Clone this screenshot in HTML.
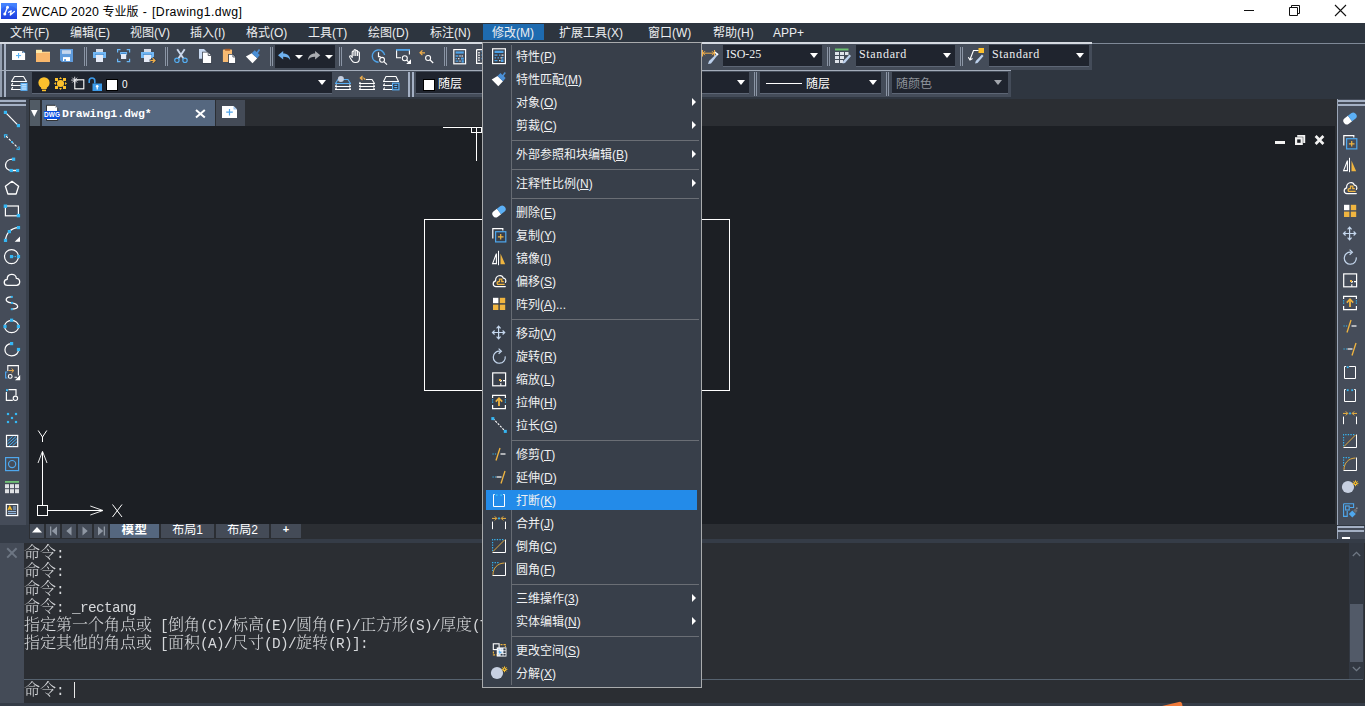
<!DOCTYPE html>
<html lang="zh-CN">
<head>
<meta charset="utf-8">
<title>ZWCAD 2020 专业版 - [Drawing1.dwg]</title>
<style>
*{box-sizing:border-box;margin:0;padding:0}
html,body{width:1365px;height:706px;overflow:hidden;background:#2b2e33}
body{position:relative;font-family:"Liberation Sans","Noto Sans CJK SC",sans-serif;font-size:12px;color:#e6e8ea}
.abs{position:absolute}
svg{position:absolute;overflow:visible}
#title{left:0;top:0;width:1365px;height:23px;background:#fff;color:#000}
#title .t{position:absolute;left:22px;top:4px;font-size:12.3px;line-height:16px;white-space:nowrap;letter-spacing:0}
#t1{letter-spacing:0.1px}#t2{font-size:12px}#t3{letter-spacing:0.9px}#t4{letter-spacing:0.4px}
#menubar{left:0;top:23px;width:1365px;height:20px;background:#2d353f}
#menubar span{position:absolute;top:1.7px;line-height:17px;font-size:12px;white-space:nowrap;color:#eceef0}
#menubar .hl{position:absolute;left:483px;top:1px;width:61px;height:16px;background:#1e6bb0}
#tbarea{left:0;top:43px;width:1365px;height:57px;background:#2f3640}
.tb{position:absolute;background:#444c59}
.hline{position:absolute;height:1px;background:#a3acba}
.combo{position:absolute;height:22px;background:#1f242e;border-bottom:1px solid #5d6675;color:#eceef0;font-size:12px;line-height:21px;white-space:nowrap}
.arr{position:absolute;width:0;height:0;border-left:4.5px solid transparent;border-right:4.5px solid transparent;border-top:5px solid #fff}
.grip{position:absolute;width:1px;background:#8b95a5}
.ser{font-family:"Liberation Serif","Noto Serif CJK SC",serif}
.mono{font-family:"Liberation Mono","Noto Serif CJK SC",monospace}
#lpal{left:0;top:99px;width:29px;height:426px;background:#39404b}
#lpal .in{position:absolute;left:0;top:0;width:26px;height:426px;background:#454c59}
#rpal{left:1337px;top:99px;width:28px;height:440px;background:#454c59}
#tabbar{left:29px;top:99px;width:1308px;height:27px;background:#2b2e33}
#canvas{left:29px;top:126px;width:1306px;height:398px;background:#1c1f24}
#laybar{left:29px;top:524px;width:1308px;height:15px;background:#2b2e33}
.lb{position:absolute;top:524px;height:14px;background:#444b57;color:#fff;text-align:center;font-size:12px;line-height:12.6px;white-space:nowrap;overflow:hidden}
#cmdsep{left:0;top:539px;width:1365px;height:4px;background:#353c47}
#cmd{left:0;top:543px;width:1365px;height:160px;background:#2b2e33}
#cmd .side{position:absolute;left:0;top:0;width:24px;height:160px;background:#444b57}
.ln{position:absolute;left:24px;height:18px;font-size:16px;line-height:18px;white-space:pre;color:#d6d8db;font-weight:300;font-family:"Liberation Mono","Noto Serif CJK SC",monospace}
.ln{will-change:transform}
.ln i{font-style:normal;font-size:14.4px;letter-spacing:-0.64px}
#bottom{left:0;top:703px;width:1365px;height:3px;background:#353c47}
#dd{left:482px;top:42px;width:220px;height:646px;background:#383f4a;border:1px solid #a9abad}
#dd .col{position:absolute;left:28px;top:2px;width:1px;height:640px;background:#666b73}
.it{position:absolute;left:516px;height:23px;line-height:22px;font-size:12px;color:#f0f1f2;white-space:nowrap}
.it u{text-decoration:underline;text-underline-offset:1px;text-decoration-thickness:1px}
.sep{position:absolute;left:512px;width:187px;height:1px;background:#6a6e75}
.sub{position:absolute;left:692px;width:0;height:0;border-top:4px solid transparent;border-bottom:4px solid transparent;border-left:4.5px solid #fff}
</style>
</head>
<body>

<div id="title" class="abs">
<div class="t"><span id="t1">ZWCAD 2020 </span><span id="t2">专业版</span><span id="t3"> - </span><span id="t4">[Drawing1.dwg]</span></div>
</div>
<svg style="left:1px;top:3px" width="16" height="16" viewBox="0 0 16 16"><defs><linearGradient id="lg" x1="0" y1="0" x2="0" y2="1"><stop offset="0" stop-color="#3f7dff"/><stop offset="1" stop-color="#1d3ee0"/></linearGradient></defs><rect width="16" height="16" fill="url(#lg)"/><path d="M0 6 C4 1.5 11 1.5 16 6 V0 H0 Z" fill="#4a8aff" opacity="0.55"/><path d="M6.5 4.2 L3.8 11" stroke="#fff" stroke-width="1.3"/><circle cx="6.5" cy="4.2" r="1.5" fill="#fff"/><circle cx="3.8" cy="11" r="1.5" fill="#fff"/><path d="M7.6 9.2 L10.2 7.8 L9.3 12 L13.4 8.4" stroke="#fff" stroke-width="1.3" fill="none" stroke-linejoin="round" stroke-linecap="round"/></svg>
<svg style="left:1244px;top:10px" width="10" height="1" viewBox="0 0 10 1"><rect width="10" height="1" fill="#111"/></svg>
<svg style="left:1289px;top:5px" width="11" height="11" viewBox="0 0 11 11"><path d="M0.5 2.5 H8.5 V10.5 H0.5 Z M2.5 2.5 V0.5 H10.5 V8.5 H8.5" fill="none" stroke="#111" stroke-width="1"/></svg>
<svg style="left:1335px;top:5px" width="11" height="11" viewBox="0 0 11 11"><path d="M0 0 L11 11 M11 0 L0 11" stroke="#111" stroke-width="1.1"/></svg>
<div id="menubar" class="abs"><div class="hl"></div>
<span style="left:10px">文件(F)</span>
<span style="left:70px">编辑(E)</span>
<span style="left:130px">视图(V)</span>
<span style="left:190px">插入(I)</span>
<span style="left:246px">格式(O)</span>
<span style="left:308px">工具(T)</span>
<span style="left:368px">绘图(D)</span>
<span style="left:430px">标注(N)</span>
<span style="left:492px">修改(M)</span>
<span style="left:559px">扩展工具(X)</span>
<span style="left:648px">窗口(W)</span>
<span style="left:713px">帮助(H)</span>
<span style="left:773px">APP+</span>
</div>
<div id="tbarea" class="abs"></div>
<div class="tb" style="left:0;top:43px;width:1092px;height:27px"></div>
<div class="tb" style="left:0;top:70px;width:1011px;height:27px"></div>
<div class="hline" style="left:0;top:43px;width:1365px;background:#7f8997"></div><div class="hline" style="left:0;top:42px;height:1.7px;width:1092px;background:#d5dae1"></div>
<div class="hline" style="left:0;top:70px;width:1011px"></div>
<div class="abs" style="left:0px;top:44px;width:2px;height:26px;background:#949fb0"></div><div class="abs" style="left:4px;top:44px;width:2px;height:26px;background:#a7b2c4"></div>
<svg style="left:12px;top:50px" width="14" height="11" viewBox="0 0 14 11"><path d="M0 0.9 H10.2 V3.1 H13.1 V10 H0 Z" fill="#fff"/><path d="M10.7 0.9 L13.1 3.1 H10.7 Z" fill="#8fc8fb"/><rect x="6" y="3" width="1.1" height="5.2" fill="#5ab4f5"/><rect x="4" y="5" width="5.1" height="1.1" fill="#5ab4f5"/></svg>
<svg style="left:36px;top:50px" width="15" height="13" viewBox="0 0 15 13"><rect x="0" y="-0.2" width="6" height="3.4" fill="#fde9a9"/><rect x="6" y="1.7" width="8" height="1.5" fill="#fbd28c"/><rect x="0" y="3" width="14" height="9" fill="#f8b76c"/></svg>
<svg style="left:60px;top:49px" width="13" height="14" viewBox="0 0 13 14"><path d="M0 0 H13 V13 H1.8 L0 11.2 Z" fill="#5f9bdc"/><rect x="2" y="1.2" width="9" height="3.7" fill="#c4d6ee"/><rect x="3" y="8.1" width="7" height="3.9" fill="#fff"/><rect x="4.2" y="10.1" width="1.7" height="1.9" fill="#4a8fd6"/></svg>
<div class="grip" style="left:84px;top:47px;height:19px"></div><div class="grip" style="left:86px;top:47px;height:19px"></div>
<svg style="left:93px;top:49px" width="14" height="14" viewBox="0 0 14 14"><rect x="3" y="0" width="7" height="3.2" fill="#d6dbe6"/><rect x="0" y="3" width="13" height="6" fill="#73b8f5"/><rect x="2.2" y="4.9" width="8.6" height="0.9" fill="#3a7fc4"/><rect x="3" y="5.8" width="7" height="7.2" fill="#e6ebf7"/></svg>
<svg style="left:117px;top:49px" width="14" height="14" viewBox="0 0 14 14"><path d="M0.6 3.5 V0.6 H3.5 M9.7 0.6 H12.6 V3.5 M12.6 9.7 V12.6 H9.7 M3.5 12.6 H0.6 V9.7" fill="none" stroke="#6ab7f7" stroke-width="1.2"/><rect x="3.1" y="3" width="7" height="2.7" fill="#73b8f5"/><rect x="3.9" y="4" width="5.4" height="0.8" fill="#3a7fc4"/><rect x="4" y="5" width="5.2" height="5" fill="#e6ebf7"/></svg>
<svg style="left:141px;top:49px" width="15" height="15" viewBox="0 0 15 15"><rect x="3" y="0" width="7" height="3.2" fill="#d6dbe6"/><rect x="0" y="3" width="13" height="6" fill="#73b8f5"/><rect x="2.2" y="4.9" width="8.6" height="0.9" fill="#3a7fc4"/><rect x="3" y="5.8" width="7" height="7.2" fill="#e6ebf7"/><path d="M8.6 11.5 H14.4 M11.6 8.8 L14.4 11.5 L11.6 14.2" fill="none" stroke="#39414d" stroke-width="2.6"/><path d="M9.2 11.5 H13.8 M11.6 9.2 L14 11.5 L11.6 13.8" fill="none" stroke="#f3b04a" stroke-width="1.2"/></svg>
<div class="grip" style="left:165px;top:47px;height:19px"></div><div class="grip" style="left:167px;top:47px;height:19px"></div>
<svg style="left:174px;top:49px" width="15" height="15" viewBox="0 0 15 15"><path d="M3.2 0.3 L9.3 9.3 M10.7 0.3 L4.6 9.3" stroke="#cbd8ec" stroke-width="1.9" fill="none"/><circle cx="2.9" cy="11.3" r="2.2" fill="none" stroke="#55b0f5" stroke-width="1.2"/><circle cx="11" cy="11.3" r="2.2" fill="none" stroke="#55b0f5" stroke-width="1.2"/></svg>
<svg style="left:198px;top:49px" width="14" height="15" viewBox="0 0 14 15"><path d="M1 0 H6 L8.5 2.5 V9.8 H1 Z" fill="#c9daf2"/><path d="M4.1 2.7 H10.6 L13.9 6 V14.8 H4.1 Z" fill="#38404c"/><path d="M4.9 3.5 H10.2 L13.1 6.4 V14 H4.9 Z" fill="#fff"/><path d="M10.2 3.3 V6.5 H13.3" fill="none" stroke="#38404c" stroke-width="0.8"/></svg>
<svg style="left:222px;top:49px" width="14" height="15" viewBox="0 0 14 15"><rect x="0.9" y="0.5" width="9.1" height="12.6" rx="0.6" fill="#f8bb72"/><rect x="3.1" y="-0.2" width="5" height="1.9" fill="#b0622a"/><path d="M6.2 4.9 H11.2 L13.9 7.6 V14.8 H6.2 Z" fill="#38404c"/><path d="M7 5.7 H10.9 L13.1 7.9 V14 H7 Z" fill="#fff"/><path d="M10.9 5.5 V8 H13.3" fill="none" stroke="#38404c" stroke-width="0.8"/></svg>
<svg style="left:246px;top:49px" width="15" height="15" viewBox="0 0 15 15"><g transform="translate(0,0)"><path d="M-0.1 7.5 L5.7 4.2 L11.2 9.3 L6.5 14.3 Z" fill="#fff"/><path d="M5.7 4.2 L8.7 1.2 L10.6 3 L12.9 0 L14.1 1.1 L11.9 4.2 L13.8 6 L11.2 9.3 Z" fill="#4a8fd6"/></g></svg>
<div class="grip" style="left:270px;top:47px;height:19px"></div><div class="grip" style="left:272px;top:47px;height:19px"></div>
<div class="abs" style="left:275px;top:45px;width:60px;height:23px;background:#1f242e"></div>
<svg style="left:278px;top:51px" width="13" height="10" viewBox="0 0 13 10"><path d="M0 4.2 L5.2 0 V2.6 C9.5 2.6 12 5 12.3 9.3 C10.8 6.7 8.8 5.8 5.2 5.8 V8.4 Z" fill="#6fb2f0"/></svg>
<div class="arr" style="left:295px;top:55px;border-left-width:4px;border-right-width:4px;border-top-width:4.5px"></div>
<svg style="left:308px;top:51px" width="13" height="10" viewBox="0 0 13 10"><path d="M12.3 4.2 L7.1 0 V2.6 C2.8 2.6 0.3 5 0 9.3 C1.5 6.7 3.5 5.8 7.1 5.8 V8.4 Z" fill="#a9acb1"/></svg>
<div class="arr" style="left:325px;top:55px;border-left-width:4px;border-right-width:4px;border-top-width:4.5px"></div>
<div class="grip" style="left:339px;top:47px;height:19px"></div><div class="grip" style="left:341px;top:47px;height:19px"></div>
<svg style="left:349px;top:49px" width="13" height="15" viewBox="0 0 13 15"><path d="M3.2 8.5 V3 Q3.2 2 4.1 2 Q5 2 5 3 V1.6 Q5 0.6 5.9 0.6 Q6.8 0.6 6.8 1.6 V2.4 Q6.8 1.4 7.7 1.4 Q8.6 1.4 8.6 2.4 V3.6 Q8.6 2.8 9.5 2.8 Q10.4 2.8 10.4 3.8 V9.5 Q10.4 13.5 6.8 13.5 H6 Q4 13.5 2.6 11.2 L0.8 8.2 Q0.3 7.2 1.2 6.8 Q2 6.5 2.6 7.4 Z M5 3 V7 M6.8 2.4 V7 M8.6 3.6 V7" fill="none" stroke="#fff" stroke-width="1.1" stroke-linejoin="round"/></svg>
<svg style="left:372px;top:49.6px" width="17" height="15" viewBox="0 0 17 15"><path d="M6.5 12.3 A6.2 6.2 0 1 1 12.6 5" fill="none" stroke="#4fa3e8" stroke-width="1.4"/><path d="M6.5 2.2 V6.6 H8.6" fill="none" stroke="#fff" stroke-width="1.2"/><circle cx="10.1" cy="9.8" r="2.4" fill="none" stroke="#fff" stroke-width="1.1"/><path d="M11.9 11.6 L15 14.6" stroke="#fff" stroke-width="1.2"/></svg>
<svg style="left:396px;top:49px" width="16" height="15" viewBox="0 0 16 15"><rect x="0" y="0" width="14" height="1.8" fill="#4fa3e8"/><path d="M5 8.8 H0.6 V1.5 M13.4 1.5 V5.5" fill="none" stroke="#fff" stroke-width="1.1"/><circle cx="8.8" cy="9.2" r="2.5" fill="none" stroke="#fff" stroke-width="1.1"/><path d="M10.6 11 L12.4 12.8" stroke="#fff" stroke-width="1.2"/><path d="M15 10.2 V15 H10.2 Z" fill="#fff"/></svg>
<svg style="left:419px;top:49px" width="15" height="15" viewBox="0 0 15 15"><path d="M1 3.8 H6 M3.4 1.4 L1 3.8 L3.4 6.2" fill="none" stroke="#f3b04a" stroke-width="1.2"/><circle cx="9.1" cy="9" r="2.5" fill="none" stroke="#fff" stroke-width="1.1"/><path d="M10.9 10.8 L14.2 14" stroke="#fff" stroke-width="1.2"/></svg>
<div class="grip" style="left:444px;top:47px;height:19px"></div><div class="grip" style="left:446px;top:47px;height:19px"></div>
<svg style="left:453px;top:49px" width="14" height="16" viewBox="0 0 14 16"><rect x="0.8" y="0.6" width="11.8" height="14.2" fill="none" stroke="#fff" stroke-width="1.2"/><rect x="2.6" y="2.4" width="8.2" height="2.2" fill="#4fa3e8"/><path d="M2.6 7 H5.4 M2.6 9.6 H4 M2.6 12.2 H5.4" stroke="#4fa3e8" stroke-width="1.3"/><path d="M6.4 7 H7.6 M8.6 7 H9.8 M5 9.6 H6.4 M6.4 12.2 H7.6" stroke="#dfe3ea" stroke-width="1.3"/><rect x="8" y="8.6" width="2.8" height="2" fill="#4fa3e8"/><rect x="8.6" y="11.2" width="2.2" height="2.4" fill="#4fa3e8"/></svg>
<svg style="left:476px;top:49px" width="8" height="15" viewBox="0 0 8 15"><path d="M0.6 0.6 H8 M0.6 0.6 V14.4 H8" fill="none" stroke="#fff" stroke-width="1.2"/><path d="M3 3 V12" stroke="#fff" stroke-width="1.4" stroke-dasharray="1.5 1"/><path d="M5.5 2.5 H8 M5.5 6 H8 M5.5 9.5 H8" stroke="#4fa3e8" stroke-width="1.5"/></svg>
<svg style="left:702px;top:47px" width="17" height="18" viewBox="0 0 17 18"><path d="M0.5 3 V9.5 M12.5 3 V9.5" stroke="#f3b04a" stroke-width="1.1"/><path d="M1 6.2 H12 M3 4.2 L1 6.2 L3 8.2 M10 4.2 L12 6.2 L10 8.2" fill="none" stroke="#f3b04a" stroke-width="1"/><path d="M15.5 6 L16.5 7 L9 16.5 L6 17 L7 14 Z" fill="#bcd0ec"/><path d="M13 5 L16 8" stroke="#fff" stroke-width="1.5"/></svg>
<div class="combo ser" style="left:723px;top:45px;width:99px"><span style="position:absolute;left:3px;top:-1px;font-size:12px">ISO-25</span></div>
<div class="arr" style="left:810px;top:53px"></div>
<div class="grip" style="left:827px;top:47px;height:19px"></div><div class="grip" style="left:829px;top:47px;height:19px"></div>
<svg style="left:835px;top:48px" width="16" height="16" viewBox="0 0 16 16"><rect x="0" y="0.5" width="13.5" height="2" fill="#6cc070"/><path d="M0 4 H4 V7 H0 Z M5 4 H9 V7 H5 Z M10 4 H13.5 V7 H10 Z M0 8 H4 V11 H0 Z M5 8 H9 V11 H5 Z M0 12 H4 V15 H0 Z M5 12 H8 V15 H5 Z" fill="#dfe3ea"/><path d="M14.5 6.5 L16 8 L10 15 L7.5 15.5 L8.3 13 Z" fill="#bcd0ec"/></svg>
<div class="combo ser" style="left:856px;top:45px;width:99px"><span style="position:absolute;left:3px;top:-1px;font-size:12px;letter-spacing:0.66px">Standard</span></div>
<div class="arr" style="left:943px;top:53px"></div>
<div class="grip" style="left:960px;top:47px;height:19px"></div><div class="grip" style="left:962px;top:47px;height:19px"></div>
<svg style="left:968px;top:48px" width="16" height="17" viewBox="0 0 16 17"><rect x="10.5" y="0" width="5.5" height="5" fill="#fcc12d"/><path d="M10.5 2.5 H5.5 L2 11.5 M0.3 9.2 L2 12 L4.6 10.6" fill="none" stroke="#fff" stroke-width="1.1"/><path d="M14 6.5 L15.5 8 L9.5 15 L7 15.5 L7.8 13 Z" fill="#bcd0ec"/></svg>
<div class="combo ser" style="left:989px;top:45px;width:100px"><span style="position:absolute;left:3px;top:-1px;font-size:12px;letter-spacing:0.66px">Standard</span></div>
<div class="arr" style="left:1076px;top:53px"></div>
<div class="abs" style="left:0px;top:71px;width:2px;height:26px;background:#949fb0"></div><div class="abs" style="left:4px;top:71px;width:2px;height:26px;background:#a7b2c4"></div>
<svg style="left:11px;top:70px" width="17" height="22" viewBox="0 0 17 22"><path d="M3.5 6.5 H12.5 L15.5 11.5 H0.5 Z" fill="none" stroke="#fff" stroke-width="1.1" stroke-linejoin="round"/><path d="M1.7 13 L0.5 15.5 H10 M1.7 17 L0.5 19.5 H10" fill="none" stroke="#fff" stroke-width="1.1" stroke-linejoin="round"/><rect x="9.5" y="12.9" width="7" height="8" fill="#5ab0f5"/><path d="M10.5 14.8 H15.5 M10.5 16.9 H15.5 M10.5 19 H15.5" stroke="#eaf3fc" stroke-width="1"/></svg>
<div class="combo" style="left:32px;top:72px;width:300px"><span style="position:absolute;left:90px;top:2px;font-size:10px;color:#fff">0</span></div>
<svg style="left:37.6px;top:77px" width="12" height="15" viewBox="0 0 12 15"><circle cx="6" cy="5.8" r="5.6" fill="#fcc12d"/><rect x="3.2" y="9" width="5.6" height="3" fill="#fcc12d"/><rect x="4" y="12.6" width="4" height="1.6" fill="#fcc12d"/></svg>
<svg style="left:54px;top:77.2px" width="13" height="13" viewBox="0 0 13 13"><circle cx="6.5" cy="6.5" r="3.6" fill="#fcc12d"/><path d="M1 1 H4 V4 H1 Z M9 1 H12 V4 H9 Z M1 9 H4 V12 H1 Z M9 9 H12 V12 H9 Z" fill="#fcc12d"/><path d="M6.5 0 L8 2 H5 Z M6.5 13 L8 11 H5 Z M0 6.5 L2 5 V8 Z M13 6.5 L11 5 V8 Z" fill="#fcc12d"/></svg>
<svg style="left:71px;top:77px" width="14" height="13" viewBox="0 0 14 13"><rect x="3.8" y="2.8" width="9" height="9" fill="none" stroke="#fff" stroke-width="1.1"/><path d="M3.7 -0.3 V6.6 M0.2 3.1 H7.2 M1.3 0.7 L6.1 5.5 M6.1 0.7 L1.3 5.5" stroke="#e6e8ec" stroke-width="0.9"/></svg>
<svg style="left:88px;top:77px" width="15" height="15" viewBox="0 0 15 15"><path d="M1.2 6 V3.8 Q1.2 1 4 1 Q6.8 1 6.8 3.8 V6.5" fill="none" stroke="#3d9be9" stroke-width="1.6"/><rect x="4.5" y="6.5" width="9.5" height="7.5" fill="#3d9be9"/><circle cx="9.2" cy="9.3" r="1.3" fill="#fff"/><rect x="8.6" y="9.5" width="1.2" height="3" fill="#fff"/></svg>
<div class="abs" style="left:106px;top:79px;width:12px;height:12px;background:#fff;border:1px solid #000"></div>
<div class="arr" style="left:318px;top:80px"></div>
<svg style="left:335px;top:70px" width="17" height="22" viewBox="0 0 17 22"><path d="M1.5 14.5 L0.5 16.5 H15.5 L14.5 14.5 M1.5 17.5 L0.5 19.5 H15.5 L14.5 17.5" fill="none" stroke="#fff" stroke-width="1.1" stroke-linejoin="round"/><path d="M3 9.5 H13 L15.5 13.5 H0.5 Z" fill="none" stroke="#5ab0f5" stroke-width="1.1" stroke-linejoin="round"/><circle cx="5.9" cy="8.9" r="3" fill="#c6cfe0"/></svg>
<svg style="left:359px;top:70px" width="17" height="22" viewBox="0 0 17 22"><path d="M7 9.5 H13 L15.5 13.5 H0.5 L1.3 12 M1.5 14.6 L0.5 16.5 H15.5 L14.5 14.6 M1.5 17.6 L0.5 19.5 H15.5 L14.5 17.6" fill="none" stroke="#fff" stroke-width="1.1" stroke-linejoin="round"/><path d="M1.5 8 H4.5 Q6 8 6 10 M3.5 5.8 L1.3 8 L3.5 10.2" fill="none" stroke="#f3b04a" stroke-width="1.2"/></svg>
<svg style="left:383px;top:70px" width="17" height="22" viewBox="0 0 17 22"><path d="M3 6.5 H13 L15.5 11.5 H0.5 Z" fill="none" stroke="#fff" stroke-width="1.1" stroke-linejoin="round"/><path d="M1.6 13.4 L0.5 15.5 H9 M1.6 17.4 L0.5 19.5 H9" fill="none" stroke="#fff" stroke-width="1.1" stroke-linejoin="round"/><rect x="9.6" y="13.2" width="6.3" height="6.6" fill="#2b3340" stroke="#5ab0f5" stroke-width="1.2"/><path d="M11.3 15.4 H14.3 M11.3 17.6 H14.3" stroke="#5ab0f5" stroke-width="1.2"/></svg>
<div class="abs" style="left:408px;top:72px;width:2px;height:25px;background:#a4b0c4"></div><div class="abs" style="left:412px;top:72px;width:2px;height:25px;background:#a4b0c4"></div>
<div class="combo" style="left:416px;top:72px;width:333px"><span style="position:absolute;left:22px;top:2px;font-size:12px;color:#fff">随层</span></div>
<div class="abs" style="left:423px;top:79px;width:12px;height:12px;background:#fff;border:1px solid #000"></div>
<div class="arr" style="left:737px;top:80px"></div>
<div class="grip" style="left:754px;top:72px;height:24px"></div><div class="grip" style="left:756px;top:72px;height:24px"></div>
<div class="combo" style="left:760px;top:72px;width:121px"><span style="position:absolute;left:46px;top:2px;color:#fff">随层</span><span style="position:absolute;left:6px;top:11px;width:36px;height:1px;background:#fff"></span></div>
<div class="arr" style="left:869px;top:80px"></div>
<div class="grip" style="left:886px;top:72px;height:24px"></div><div class="grip" style="left:888px;top:72px;height:24px"></div>
<div class="combo" style="left:892px;top:72px;width:116px;color:#8e939b"><span style="position:absolute;left:4px;top:2px">随颜色</span></div>
<div class="arr" style="left:994px;top:80px;border-top-color:#a3a7ad"></div>
<div id="lpal" class="abs"><div class="in"></div></div>
<div id="rpal" class="abs"></div>
<div class="abs" style="left:0;top:100px;width:26px;height:2px;background:#a4b0c4"></div><div class="abs" style="left:0;top:104px;width:26px;height:2px;background:#a4b0c4"></div>
<svg style="left:0;top:0" width="30" height="530" viewBox="0 0 30 530"><path d="M5.4 112.4 L18.4 125.6" fill="none" stroke="#fff" stroke-width="1.2"/><rect x="3.8000000000000003" y="110.80000000000001" width="3.2" height="3.2" fill="#36b7f4"/><rect x="16.799999999999997" y="124.0" width="3.2" height="3.2" fill="#36b7f4"/><path d="M6 136 L18 148" fill="none" stroke="#fff" stroke-width="1.1" stroke-dasharray="2.5 1.6"/><path d="M4.3 134.6 L7.6 135.2 M4.3 134.6 L4.9 137.9 M19.5 149.6 L16.2 149 M19.5 149.6 L18.9 146.3" stroke="#36b7f4" stroke-width="1.2" fill="none"/><rect x="11.0" y="141.0" width="1.8" height="1.8" fill="#36b7f4"/><path d="M13.5 159.2 C3.5 158.5 3 170.5 11.5 170.5 H17.5" fill="none" stroke="#fff" stroke-width="1.3"/><rect x="12.0" y="157.6" width="3.2" height="3.2" fill="#36b7f4"/><rect x="9.700000000000001" y="168.9" width="3.2" height="3.2" fill="#36b7f4"/><rect x="16.0" y="168.9" width="3.2" height="3.2" fill="#36b7f4"/><path d="M12 181.3 L18.6 186.2 L16.1 194 H7.9 L5.4 186.2 Z" fill="none" stroke="#fff" stroke-width="1.3" stroke-linejoin="round"/><rect x="5.4" y="206" width="13" height="9.8" fill="none" stroke="#fff" stroke-width="1.2"/><rect x="3.7" y="204.5" width="3.4" height="3.4" fill="#36b7f4"/><rect x="16.7" y="213.9" width="3.4" height="3.4" fill="#36b7f4"/><path d="M5.5 240.5 C6 233 11 228 18.5 227.6" fill="none" stroke="#fff" stroke-width="1.3"/><rect x="3.9" y="238.8" width="3.2" height="3.2" fill="#36b7f4"/><rect x="7.800000000000001" y="230.0" width="3.2" height="3.2" fill="#36b7f4"/><rect x="16.9" y="226.0" width="3.2" height="3.2" fill="#36b7f4"/><path d="M20 236.5 V241.8 H14.7 Z" fill="#fff"/><circle cx="11.5" cy="256.6" r="7" fill="none" stroke="#fff" stroke-width="1.2"/><path d="M12 256.6 H18" stroke="#36b7f4" stroke-width="1" stroke-dasharray="1.5 1"/><rect x="9.9" y="255.00000000000003" width="3.2" height="3.2" fill="#36b7f4"/><rect x="16.9" y="255.00000000000003" width="3.2" height="3.2" fill="#36b7f4"/><path d="M7.5 285.3 C3.2 285.3 3.2 279.6 7.2 279.3 C7 273 16 273 16.3 278.3 C20.8 278.5 20.8 285.3 16.5 285.3 Z" fill="none" stroke="#fff" stroke-width="1.3" stroke-linejoin="round"/><path d="M11.8 296.8 C5 296.5 4 302 11 302.8 C19 303.5 20.5 309.2 11.6 309.2" fill="none" stroke="#fff" stroke-width="1.3"/><rect x="10.8" y="295.9" width="2" height="2" fill="#36b7f4"/><rect x="11" y="301.9" width="2" height="2" fill="#36b7f4"/><rect x="10.8" y="308.2" width="2" height="2" fill="#36b7f4"/><ellipse cx="11.6" cy="326.5" rx="7" ry="6.2" fill="none" stroke="#fff" stroke-width="1.2"/><rect x="10.0" y="318.59999999999997" width="3.2" height="3.2" fill="#36b7f4"/><rect x="3.4" y="324.9" width="3.2" height="3.2" fill="#36b7f4"/><rect x="16.799999999999997" y="324.9" width="3.2" height="3.2" fill="#36b7f4"/><path d="M11.5 343.6 C3 343.6 2.5 355.8 11.5 355.8 C16 355.8 18.6 353 18.5 349.5" fill="none" stroke="#fff" stroke-width="1.2"/><rect x="10.0" y="342.0" width="3.2" height="3.2" fill="#36b7f4"/><rect x="16.9" y="347.9" width="3.2" height="3.2" fill="#36b7f4"/><path d="M7.8 371 V365.6 H18.4 V375.5 M14.5 377.2 H17" fill="none" stroke="#fff" stroke-width="1.1"/><path d="M7.5 372 H5.6 V378 H7.5" fill="none" stroke="#4fa3e8" stroke-width="1.2"/><path d="M8.5 370.6 H13.5 M11.6 368.5 L13.8 370.6 L11.6 372.7" fill="none" stroke="#f3b04a" stroke-width="1"/><circle cx="10.2" cy="376.4" r="1.9" fill="none" stroke="#fff" stroke-width="1.1"/><path d="M20.2 375 V380.2 H15 Z" fill="#fff"/><path d="M8.5 389.6 H16 V395.5 M6.4 392 V400.4 H12.8" fill="none" stroke="#fff" stroke-width="1.2"/><circle cx="15.4" cy="398.3" r="2.2" fill="none" stroke="#fff" stroke-width="1.1"/><rect x="6" y="389.2" width="2" height="2" fill="#36b7f4"/><rect x="6.9" y="412.9" width="2.2" height="2.2" fill="#36b7f4"/><rect x="14.9" y="412.9" width="2.2" height="2.2" fill="#36b7f4"/><rect x="10.9" y="416.9" width="2.2" height="2.2" fill="#36b7f4"/><rect x="6.9" y="420.9" width="2.2" height="2.2" fill="#36b7f4"/><rect x="14.9" y="420.9" width="2.2" height="2.2" fill="#36b7f4"/><rect x="6.5" y="435.4" width="11.2" height="11.2" fill="none" stroke="#fff" stroke-width="1.2"/><path d="M7.5 441 L12.5 436.5 M7.5 444 L16 436.5 M9 445.8 L17 438.5 M12.5 445.8 L17 441.7" stroke="#3fa9ef" stroke-width="1" fill="none"/><rect x="5.6" y="457.6" width="13" height="13" fill="none" stroke="#4fa8ee" stroke-width="1.2"/><circle cx="12.1" cy="464.1" r="3.6" fill="none" stroke="#4fa8ee" stroke-width="1.2"/><rect x="5" y="481" width="14" height="1.8" fill="#6fc276"/><rect x="5" y="484.2" width="4" height="4" fill="#dfe1e4"/><rect x="10" y="484.2" width="4" height="4" fill="#dfe1e4"/><rect x="15" y="484.2" width="4" height="4" fill="#dfe1e4"/><rect x="5" y="489.2" width="4" height="4" fill="#dfe1e4"/><rect x="10" y="489.2" width="4" height="4" fill="#dfe1e4"/><rect x="15" y="489.2" width="4" height="4" fill="#dfe1e4"/><rect x="6.3" y="504.4" width="11.4" height="11.2" fill="none" stroke="#fff" stroke-width="1.2"/><path d="M8 510 L9.8 506.3 L11.6 510 M8.6 508.8 H11" stroke="#fcc12d" stroke-width="1.2" fill="none"/><path d="M13 507 H16 M13 509 H16 M8 511.6 H16 M8 513.6 H16" stroke="#9ec3ea" stroke-width="1"/></svg>
<div class="abs" style="left:1337px;top:99px;width:1.3px;height:426px;background:#9ba6b8"></div>
<div class="abs" style="left:1338px;top:100px;width:27px;height:2px;background:#a4b0c4"></div><div class="abs" style="left:1338px;top:104px;width:27px;height:2px;background:#a4b0c4"></div>
<svg style="left:0;top:0" width="1365" height="540" viewBox="0 0 1365 540"><g transform="translate(1342,111)"><g transform="rotate(-38 8 7.5)"><path d="M0.5 7.5 A3.4 3.4 0 0 1 3.9 4.1 H8 V10.9 H3.9 A3.4 3.4 0 0 1 0.5 7.5 Z" fill="#fff"/><path d="M8 4.1 H12.1 A3.4 3.4 0 0 1 12.1 10.9 H8 Z" fill="#5cb0f6"/></g></g><g transform="translate(1342,134)"><path d="M1.8 11.6 V1.6 H11.8 V3.4" fill="none" stroke="#fff" stroke-width="1.2"/><rect x="4.6" y="4.7" width="10.2" height="10.2" fill="none" stroke="#4fa8ee" stroke-width="1.2"/><path d="M9.7 7 V12.6 M6.9 9.8 H12.5" stroke="#f0b540" stroke-width="1.2"/></g><g transform="translate(1342,157)"><path d="M5.4 3.6 V13.6 H1.6 Z" fill="none" stroke="#fff" stroke-width="1.1" stroke-linejoin="miter"/><rect x="7" y="0.8" width="1" height="14.4" fill="#fff"/><path d="M9.5 3.6 V14.2 H14.2 Z" fill="#f0b540"/></g><g transform="translate(1342,180)"><path d="M14.3 13.6 H5 C1.5 13.6 1.2 8.6 4.6 7.8 C4.3 2.3 11 0.8 12.4 5.2 C14.8 5.4 15.4 8 14.4 9.4" fill="none" stroke="#fff" stroke-width="1.2" stroke-linecap="round"/><path d="M6.2 11.3 H13.6 M6.4 11.2 C5.6 9.6 6.6 8.4 8.5 8.5 V6.2 H10.8 V8.6 H12.8" fill="none" stroke="#f0b540" stroke-width="1.3"/></g><g transform="translate(1342,203)"><rect x="2" y="1.8" width="5.4" height="5.4" fill="#fff"/><rect x="8.8" y="1.8" width="5.4" height="5.4" fill="#f0b540"/><rect x="2" y="8.6" width="5.4" height="5.4" fill="#f0b540"/><rect x="8.8" y="8.6" width="5.4" height="5.4" fill="#f0b540"/></g><g transform="translate(1342,226)"><path d="M7.6 1.5 V13.5 M1.8 7.5 H13.4 M5.6 3.3 L7.6 1.2 L9.6 3.3 M5.6 11.7 L7.6 13.8 L9.6 11.7 M3.6 5.5 L1.5 7.5 L3.6 9.5 M11.6 5.5 L13.7 7.5 L11.6 9.5" fill="none" stroke="#c4d6ec" stroke-width="1.2"/></g><g transform="translate(1342,249)"><path d="M9.2 3.3 A6 6 0 1 0 14.2 8.3" fill="none" stroke="#c4d6ec" stroke-width="1.2"/><path d="M7.6 0.6 L10.4 3.2 L7.6 5.8" fill="none" stroke="#c4d6ec" stroke-width="1.2"/></g><g transform="translate(1342,272)"><rect x="1.7" y="1.9" width="12.9" height="12.9" fill="none" stroke="#fff" stroke-width="1.2"/><path d="M9.8 14.8 V9.6 H14.6" fill="none" stroke="#fff" stroke-width="1.1" stroke-dasharray="2.6 1.1"/><rect x="8" y="8" width="2" height="2" fill="#f0b540"/></g><g transform="translate(1342,295)"><path d="M1.6 4 V1.4 H14.4 V4 M1.6 11 V14.6 H14.4 V11" fill="none" stroke="#fff" stroke-width="1.2"/><path d="M1.6 5.2 V10 M14.4 5.2 V10" stroke="#36b7f4" stroke-width="1.2" stroke-dasharray="1.2 1.2"/><path d="M8 12 V5" stroke="#f0b540" stroke-width="1.8"/><path d="M4.8 7.6 L8 4.2 L11.2 7.6" fill="none" stroke="#f0b540" stroke-width="1.6"/></g><g transform="translate(1342,318)"><path d="M5 14.5 L9 2" stroke="#f0b540" stroke-width="1.3"/><path d="M9.5 8 H14.5" fill="none" stroke="#fff" stroke-width="1.2"/><path d="M1.5 8 H5.5" stroke="#36b7f4" stroke-width="1.2" stroke-dasharray="1.2 1.2"/></g><g transform="translate(1342,341)"><path d="M10 14.5 L14 2" stroke="#f0b540" stroke-width="1.3"/><path d="M5.5 8 H10.5" fill="none" stroke="#fff" stroke-width="1.2"/><path d="M1.5 8 H5" stroke="#36b7f4" stroke-width="1.2" stroke-dasharray="1.2 1.2"/></g><g transform="translate(1342,364)"><path d="M4.2 2.5 H2.5 V14.5 H13.5 V2.5 H7.2" fill="none" stroke="#fff" stroke-width="1.0"/><rect x="4.8" y="2.3000000000000003" width="1.8" height="1.8" fill="#36b7f4"/></g><g transform="translate(1342,387)"><path d="M3.8 2.5 H2.5 V14.5 H13.5 V2.5 H12.2" fill="none" stroke="#fff" stroke-width="1.0"/><rect x="4.8" y="2.3000000000000003" width="1.8" height="1.8" fill="#36b7f4"/><rect x="9.299999999999999" y="2.3000000000000003" width="1.8" height="1.8" fill="#36b7f4"/></g><g transform="translate(1342,410)"><path d="M1.5 14.2 V6.6 M14.5 14.2 V6.6" fill="none" stroke="#fff" stroke-width="1.0"/><path d="M1 3.4 H5.5 M3.8 1.4 L5.8 3.4 L3.8 5.4 M15 3.4 H10.5 M12.2 1.4 L10.2 3.4 L12.2 5.4" fill="none" stroke="#f0b540" stroke-width="1"/><rect x="7.1" y="2.5" width="1.8" height="1.8" fill="#36b7f4"/></g><g transform="translate(1342,433)"><path d="M1.5 14.5 H14.5 V1.5" fill="none" stroke="#fff" stroke-width="1.0"/><path d="M1.6 13 V1.6 H13" fill="none" stroke="#36b7f4" stroke-width="1.1" stroke-dasharray="1.3 1.3"/><path d="M2 13.5 L13.5 2" stroke="#f0b540" stroke-width="0.9"/></g><g transform="translate(1342,456)"><path d="M1.5 14.5 H14.5 V1.5" fill="none" stroke="#fff" stroke-width="1.0"/><path d="M1.6 10 V1.6 H8" fill="none" stroke="#36b7f4" stroke-width="1.1" stroke-dasharray="1.3 1.3"/><path d="M2 13.8 C2 7 6.5 2.2 13.5 2" fill="none" stroke="#f0b540" stroke-width="0.9"/></g><g transform="translate(1342,479)"><circle cx="6" cy="8" r="6.1" fill="#c7d0e1"/><path d="M13.5 1.4 V7.2 M10.6 4.3 H16.4 M11.5 2.3 L15.5 6.3 M15.5 2.3 L11.5 6.3" stroke="#fcc12d" stroke-width="1"/><circle cx="13.5" cy="4.3" r="1.7" fill="#fcc12d"/><circle cx="13.5" cy="4.3" r="0.8" fill="#454c59"/></g><g transform="translate(1342,502)"><path d="M1.6 1.8 H11.6 V5.5 H8 M1.6 1.8 V14.4 H5.2 V9" fill="none" stroke="#4fa8ee" stroke-width="1.1"/><rect x="3.6" y="4" width="3.6" height="4" fill="none" stroke="#4fa8ee" stroke-width="1.1"/><path d="M10.3 8.4 L13.8 11.9 L10.3 15.4 L6.8 11.9 Z" fill="#4fa8ee"/><path d="M11.2 8.4 L13.3 6.5 L15.6 8.8 L13.8 11 Z" fill="#6b6f76"/><rect x="14" y="5.5" width="1.6" height="1.6" fill="#8a8f98"/></g></svg>
<div class="abs" style="left:1337px;top:525px;width:28px;height:1px;background:#2f3640"></div>
<div class="abs" style="left:1337px;top:526px;width:1.3px;height:13px;background:#9ba6b8"></div>
<div class="abs" style="left:1337px;top:526.4px;width:27px;height:2px;background:#a4b0c4"></div><div class="abs" style="left:1337px;top:530px;width:27px;height:2px;background:#a4b0c4"></div>
<div class="abs" style="left:1342px;top:537px;width:8px;height:2px;background:#fff"></div>
<div id="tabbar" class="abs"></div>
<div id="canvas" class="abs"></div>
<div class="abs" style="left:30px;top:100px;width:10px;height:26px;background:#515b65"></div>
<div class="abs" style="left:42px;top:100px;width:173px;height:26px;background:#55677f"></div>
<div class="abs" style="left:216px;top:100px;width:29px;height:26px;background:#444b57"></div>
<svg style="left:31px;top:110px" width="7" height="7" viewBox="0 0 7 7"><path d="M0 0 H6.6 L3.3 6.8 Z" fill="#fff"/></svg>
<svg style="left:44px;top:105px" width="16" height="16" viewBox="0 0 16 16"><path d="M2.5 0.3 H11 L13.7 3 V15.5 H2.5 Z" fill="#fff" stroke="#111" stroke-width="0.8"/><path d="M11 0.3 L13.7 3 H11 Z" fill="#c9ccd2"/><rect x="0" y="6" width="16" height="8" fill="#0a4fe0"/><text x="8" y="12.2" font-family="Liberation Sans, sans-serif" font-size="6.4" font-weight="bold" fill="#fff" text-anchor="middle" letter-spacing="0.2">DWG</text></svg>
<div class="abs mono" style="left:62px;top:106.6px;font-size:11.5px;line-height:14px;font-weight:bold;color:#fff;white-space:nowrap">Drawing1.dwg*</div>
<svg style="left:195px;top:109px" width="11" height="10" viewBox="0 0 11 10"><path d="M1 1 L9.8 8.6 M9.8 1 L1 8.6" stroke="#fff" stroke-width="2" fill="none"/></svg>
<svg style="left:222px;top:106px" width="15" height="12" viewBox="0 0 15 12"><path d="M0 0 H11.5 L15 3.5 V12 H0 Z" fill="#fff"/><path d="M11.5 0 L15 3.5 H11.5 Z" fill="#9fc4ee"/><path d="M7.5 3 V9.5 M4.2 6.2 H10.8" stroke="#4fa3e8" stroke-width="1.2"/></svg>
<svg style="left:1275px;top:141px" width="10" height="3" viewBox="0 0 10 3"><rect width="10" height="3" fill="#f2f2f2"/></svg>
<svg style="left:1295px;top:135px" width="10" height="10" viewBox="0 0 10 10"><rect x="2.2" y="0" width="8" height="8" fill="#f2f2f2"/><rect x="-0.4" y="1.8" width="8.6" height="8.4" fill="#1c1f24"/><rect x="0" y="2.2" width="7.8" height="7.8" fill="#f2f2f2"/><rect x="2.2" y="4.4" width="3.4" height="3.4" fill="#1c1f24"/></svg>
<svg style="left:1314px;top:135px" width="11" height="10" viewBox="0 0 11 10"><path d="M1.6 1 L9.4 9 M9.4 1 L1.6 9" stroke="#f2f2f2" stroke-width="2.7"/></svg>
<svg style="left:0;top:0" width="140" height="530" viewBox="0 0 140 530"><path d="M38 463 L42.5 451.3 L47 463" fill="none" stroke="#fff" stroke-width="0.9"/><path d="M90.3 506 L103 510.5 L90.3 515" fill="none" stroke="#fff" stroke-width="0.9"/><path d="M38.2 430.5 L42.5 437 L46.8 430.5 M42.5 437 V442" fill="none" stroke="#fff" stroke-width="1"/><path d="M112.5 504.5 L122 517 M122 504.5 L112.5 517" fill="none" stroke="#fff" stroke-width="1"/></svg>
<svg style="left:0;top:0" width="1365" height="530" viewBox="0 0 1365 530" shape-rendering="crispEdges"><rect x="424.5" y="219.5" width="305" height="171" fill="none" stroke="#fff" stroke-width="1"/><path d="M443 127.5 H482 M476.5 128 V161 M471.5 127.5 V132.5 H481.5 V127.5" fill="none" stroke="#fff" stroke-width="1"/><path d="M37.5 505.5 H47.5 V515.5 H37.5 Z M42.5 505 V452 M48 510.5 H102" fill="none" stroke="#fff" stroke-width="1"/></svg>
<div id="laybar" class="abs"></div>
<div id="cmdsep" class="abs"></div>
<div id="cmd" class="abs"><div class="side"></div></div>
<div id="bottom" class="abs"></div>
<div class="abs" style="left:0;top:525px;width:29px;height:14px;background:#353c47"></div>
<div class="lb" style="left:30px;width:14px"></div>
<div class="lb" style="left:46px;width:14px"></div>
<div class="lb" style="left:62px;width:14px"></div>
<div class="lb" style="left:78px;width:14px"></div>
<div class="lb" style="left:94px;width:14px"></div>
<svg style="left:32px;top:527px" width="10" height="6" viewBox="0 0 10 6"><path d="M0 5.5 L5 0 L10 5.5 Z" fill="#fff"/></svg>
<svg style="left:50px;top:526px" width="8" height="10" viewBox="0 0 8 10"><rect x="0" y="0.5" width="1.3" height="9" fill="#8f97a3"/><path d="M7 0.5 V9.5 L1.8 5 Z" fill="#8f97a3"/></svg>
<svg style="left:66px;top:526px" width="6" height="10" viewBox="0 0 6 10"><path d="M5.5 0.5 V9.5 L0.3 5 Z" fill="#8f97a3"/></svg>
<svg style="left:82px;top:526px" width="6" height="10" viewBox="0 0 6 10"><path d="M0.5 0.5 V9.5 L5.7 5 Z" fill="#8f97a3"/></svg>
<svg style="left:97px;top:526px" width="8" height="10" viewBox="0 0 8 10"><path d="M1 0.5 V9.5 L6.2 5 Z" fill="#8f97a3"/><rect x="6.7" y="0.5" width="1.3" height="9" fill="#8f97a3"/></svg>
<div class="lb" style="left:110px;width:49px;background:#55677f;font-weight:bold;font-size:12.5px;letter-spacing:0.5px">模型</div>
<div class="lb" style="left:161px;width:53px">布局1</div>
<div class="lb" style="left:216px;width:53px">布局2</div>
<div class="lb" style="left:271px;width:30px;font-weight:bold;font-size:11px;line-height:11px">+</div>
<svg style="left:6px;top:547px" width="12" height="12" viewBox="0 0 12 12"><path d="M1.2 1.2 L10.6 10.6 M10.6 1.2 L1.2 10.6" stroke="#6d7683" stroke-width="2"/></svg>
<div class="ln" style="top:545px">命令<i>:</i></div>
<div class="ln" style="top:563px">命令<i>:</i></div>
<div class="ln" style="top:581px">命令<i>:</i></div>
<div class="ln" style="top:599px">命令<i>: _rectang</i></div>
<div class="ln" style="top:617px">指定第一个角点或<i> [</i>倒角<i>(C)/</i>标高<i>(E)/</i>圆角<i>(F)/</i>正方形<i>(S)/</i>厚度<i>(T)/</i>宽度<i>(W)]:</i></div>
<div class="ln" style="top:635px">指定其他的角点或<i> [</i>面积<i>(A)/</i>尺寸<i>(D)/</i>旋转<i>(R)]:</i></div>
<div class="abs" style="left:24px;top:679px;width:1339px;height:1px;background:#56626f"></div>
<div class="ln" style="top:682px">命令<i>: </i></div>
<div class="abs" style="left:74px;top:682px;width:1px;height:16px;background:#e8e8e8"></div>
<div class="abs" style="left:1349px;top:543px;width:15px;height:136px;background:#323842"></div>
<div class="abs" style="left:1350px;top:604px;width:13px;height:58px;background:#525a68"></div>
<svg style="left:1352px;top:551px" width="9" height="6" viewBox="0 0 9 6"><path d="M0.8 5 L4.5 1.3 L8.2 5" fill="none" stroke="#6f7884" stroke-width="1.3"/></svg>
<svg style="left:1352px;top:666px" width="9" height="6" viewBox="0 0 9 6"><path d="M0.8 1 L4.5 4.7 L8.2 1" fill="none" stroke="#6f7884" stroke-width="1.3"/></svg>
<svg style="left:1160px;top:701px" width="24" height="5" viewBox="0 0 24 5"><path d="M2 5 L20 0.8 Q21.5 0.8 22 2.5 L22.5 5 Z" fill="#f07a3a"/></svg>
<div id="dd" class="abs"><div class="col"></div></div>
<div class="abs" style="left:486px;top:490px;width:211px;height:20px;background:#238be9"></div>
<div class="it" style="top:46px">特性(<u>P</u>)</div>
<div class="it" style="top:69px">特性匹配(<u>M</u>)</div>
<div class="it" style="top:92px">对象(<u>O</u>)</div>
<div class="sub" style="top:98px"></div>
<div class="it" style="top:115px">剪裁(<u>C</u>)</div>
<div class="sub" style="top:121px"></div>
<div class="it" style="top:144px">外部参照和块编辑(<u>B</u>)</div>
<div class="sub" style="top:150px"></div>
<div class="it" style="top:173px">注释性比例(<u>N</u>)</div>
<div class="sub" style="top:179px"></div>
<div class="it" style="top:202px">删除(<u>E</u>)</div>
<div class="it" style="top:225px">复制(<u>Y</u>)</div>
<div class="it" style="top:248px">镜像(<u>I</u>)</div>
<div class="it" style="top:271px">偏移(<u>S</u>)</div>
<div class="it" style="top:294px">阵列(<u>A</u>)...</div>
<div class="it" style="top:323px">移动(<u>V</u>)</div>
<div class="it" style="top:346px">旋转(<u>R</u>)</div>
<div class="it" style="top:369px">缩放(<u>L</u>)</div>
<div class="it" style="top:392px">拉伸(<u>H</u>)</div>
<div class="it" style="top:415px">拉长(<u>G</u>)</div>
<div class="it" style="top:444px">修剪(<u>T</u>)</div>
<div class="it" style="top:467px">延伸(<u>D</u>)</div>
<div class="it" style="top:490px">打断(<u>K</u>)</div>
<div class="it" style="top:513px">合并(<u>J</u>)</div>
<div class="it" style="top:536px">倒角(<u>C</u>)</div>
<div class="it" style="top:559px">圆角(<u>F</u>)</div>
<div class="it" style="top:588px">三维操作(<u>3</u>)</div>
<div class="sub" style="top:594px"></div>
<div class="it" style="top:611px">实体编辑(<u>N</u>)</div>
<div class="sub" style="top:617px"></div>
<div class="it" style="top:640px">更改空间(<u>S</u>)</div>
<div class="it" style="top:663px">分解(<u>X</u>)</div>
<div class="sep" style="top:140px"></div>
<div class="sep" style="top:169px"></div>
<div class="sep" style="top:198px"></div>
<div class="sep" style="top:319px"></div>
<div class="sep" style="top:440px"></div>
<div class="sep" style="top:584px"></div>
<div class="sep" style="top:636px"></div>
<svg style="left:0;top:0" width="1365" height="706" viewBox="0 0 1365 706"><g transform="translate(491,48)"><rect x="1.6" y="0.8" width="12.8" height="14.8" fill="none" stroke="#fff" stroke-width="1.2"/><rect x="3.5" y="2.7" width="9" height="2.3" fill="#4fa3e8"/><path d="M3.5 7.2 H6.5 M8 7.2 H9.5 M3.5 9.8 H5 M6.5 9.8 H8 M3.5 12.6 H6.5" stroke="#4fa3e8" stroke-width="1.3"/><path d="M10.5 7.2 H12.5 M9.5 9.8 H11 M8 12.6 H9.5" stroke="#dfe3ea" stroke-width="1.3"/><rect x="10" y="11.4" width="2.5" height="2.6" fill="#4fa3e8"/><rect x="11" y="8.9" width="1.5" height="1.6" fill="#4fa3e8"/></g><g transform="translate(491,71)"><g transform="translate(0.8,0.9)"><path d="M-0.1 7.5 L5.7 4.2 L11.2 9.3 L6.5 14.3 Z" fill="#fff"/><path d="M5.7 4.2 L8.7 1.2 L10.6 3 L12.9 0 L14.1 1.1 L11.9 4.2 L13.8 6 L11.2 9.3 Z" fill="#4a8fd6"/></g></g><g transform="translate(491,204)"><g transform="rotate(-38 8 7.5)"><path d="M0.5 7.5 A3.4 3.4 0 0 1 3.9 4.1 H8 V10.9 H3.9 A3.4 3.4 0 0 1 0.5 7.5 Z" fill="#fff"/><path d="M8 4.1 H12.1 A3.4 3.4 0 0 1 12.1 10.9 H8 Z" fill="#5cb0f6"/></g></g><g transform="translate(491,227)"><path d="M1.8 11.6 V1.6 H11.8 V3.4" fill="none" stroke="#fff" stroke-width="1.2"/><rect x="4.6" y="4.7" width="10.2" height="10.2" fill="none" stroke="#4fa8ee" stroke-width="1.2"/><path d="M9.7 7 V12.6 M6.9 9.8 H12.5" stroke="#f0b540" stroke-width="1.2"/></g><g transform="translate(491,250)"><path d="M5.4 3.6 V13.6 H1.6 Z" fill="none" stroke="#fff" stroke-width="1.1" stroke-linejoin="miter"/><rect x="7" y="0.8" width="1" height="14.4" fill="#fff"/><path d="M9.5 3.6 V14.2 H14.2 Z" fill="#f0b540"/></g><g transform="translate(491,273)"><path d="M14.3 13.6 H5 C1.5 13.6 1.2 8.6 4.6 7.8 C4.3 2.3 11 0.8 12.4 5.2 C14.8 5.4 15.4 8 14.4 9.4" fill="none" stroke="#fff" stroke-width="1.2" stroke-linecap="round"/><path d="M6.2 11.3 H13.6 M6.4 11.2 C5.6 9.6 6.6 8.4 8.5 8.5 V6.2 H10.8 V8.6 H12.8" fill="none" stroke="#f0b540" stroke-width="1.3"/></g><g transform="translate(491,296)"><rect x="2" y="1.8" width="5.4" height="5.4" fill="#fff"/><rect x="8.8" y="1.8" width="5.4" height="5.4" fill="#f0b540"/><rect x="2" y="8.6" width="5.4" height="5.4" fill="#f0b540"/><rect x="8.8" y="8.6" width="5.4" height="5.4" fill="#f0b540"/></g><g transform="translate(491,325)"><path d="M7.6 1.5 V13.5 M1.8 7.5 H13.4 M5.6 3.3 L7.6 1.2 L9.6 3.3 M5.6 11.7 L7.6 13.8 L9.6 11.7 M3.6 5.5 L1.5 7.5 L3.6 9.5 M11.6 5.5 L13.7 7.5 L11.6 9.5" fill="none" stroke="#c4d6ec" stroke-width="1.2"/></g><g transform="translate(491,348)"><path d="M9.2 3.3 A6 6 0 1 0 14.2 8.3" fill="none" stroke="#c4d6ec" stroke-width="1.2"/><path d="M7.6 0.6 L10.4 3.2 L7.6 5.8" fill="none" stroke="#c4d6ec" stroke-width="1.2"/></g><g transform="translate(491,371)"><rect x="1.7" y="1.9" width="12.9" height="12.9" fill="none" stroke="#fff" stroke-width="1.2"/><path d="M9.8 14.8 V9.6 H14.6" fill="none" stroke="#fff" stroke-width="1.1" stroke-dasharray="2.6 1.1"/><rect x="8" y="8" width="2" height="2" fill="#f0b540"/></g><g transform="translate(491,394)"><path d="M1.6 4 V1.4 H14.4 V4 M1.6 11 V14.6 H14.4 V11" fill="none" stroke="#fff" stroke-width="1.2"/><path d="M1.6 5.2 V10 M14.4 5.2 V10" stroke="#36b7f4" stroke-width="1.2" stroke-dasharray="1.2 1.2"/><path d="M8 12 V5" stroke="#f0b540" stroke-width="1.8"/><path d="M4.8 7.6 L8 4.2 L11.2 7.6" fill="none" stroke="#f0b540" stroke-width="1.6"/></g><g transform="translate(491,417)"><path d="M2 1.5 L14 14" fill="none" stroke="#fff" stroke-width="1.1" stroke-dasharray="2.2 1.2"/><rect x="0.30000000000000004" y="0.10000000000000009" width="3.0" height="3.0" fill="#36b7f4"/><rect x="12.8" y="12.9" width="3.0" height="3.0" fill="#36b7f4"/></g><g transform="translate(491,446)"><path d="M5 14.5 L9 2" stroke="#f0b540" stroke-width="1.3"/><path d="M9.5 8 H14.5" fill="none" stroke="#fff" stroke-width="1.2"/><path d="M1.5 8 H5.5" stroke="#36b7f4" stroke-width="1.2" stroke-dasharray="1.2 1.2"/></g><g transform="translate(491,469)"><path d="M10 14.5 L14 2" stroke="#f0b540" stroke-width="1.3"/><path d="M5.5 8 H10.5" fill="none" stroke="#fff" stroke-width="1.2"/><path d="M1.5 8 H5" stroke="#36b7f4" stroke-width="1.2" stroke-dasharray="1.2 1.2"/></g><g transform="translate(491,492)"><path d="M3.8 2.5 H2.5 V14.5 H13.5 V2.5 H12.2" fill="none" stroke="#fff" stroke-width="1.0"/><rect x="4.8" y="2.3000000000000003" width="1.8" height="1.8" fill="#36b7f4"/><rect x="9.299999999999999" y="2.3000000000000003" width="1.8" height="1.8" fill="#36b7f4"/></g><g transform="translate(491,515)"><path d="M1.5 14.2 V6.6 M14.5 14.2 V6.6" fill="none" stroke="#fff" stroke-width="1.0"/><path d="M1 3.4 H5.5 M3.8 1.4 L5.8 3.4 L3.8 5.4 M15 3.4 H10.5 M12.2 1.4 L10.2 3.4 L12.2 5.4" fill="none" stroke="#f0b540" stroke-width="1"/><rect x="7.1" y="2.5" width="1.8" height="1.8" fill="#36b7f4"/></g><g transform="translate(491,538)"><path d="M1.5 14.5 H14.5 V1.5" fill="none" stroke="#fff" stroke-width="1.0"/><path d="M1.6 13 V1.6 H13" fill="none" stroke="#36b7f4" stroke-width="1.1" stroke-dasharray="1.3 1.3"/><path d="M2 13.5 L13.5 2" stroke="#f0b540" stroke-width="0.9"/></g><g transform="translate(491,561)"><path d="M1.5 14.5 H14.5 V1.5" fill="none" stroke="#fff" stroke-width="1.0"/><path d="M1.6 10 V1.6 H8" fill="none" stroke="#36b7f4" stroke-width="1.1" stroke-dasharray="1.3 1.3"/><path d="M2 13.8 C2 7 6.5 2.2 13.5 2" fill="none" stroke="#f0b540" stroke-width="0.9"/></g><g transform="translate(491,642)"><rect x="2.3" y="1.8" width="5.8" height="5.8" fill="none" stroke="#fff" stroke-width="1.1"/><rect x="6.3" y="6" width="8.6" height="8" fill="#c3d6f0" stroke="#fff" stroke-width="1.1"/><path d="M9.2 6 V14 M12 6 V14 M6.3 8.7 H14.9 M6.3 11.3 H14.9" stroke="#fff" stroke-width="0.9"/><rect x="12.4" y="6.4" width="2.2" height="2" fill="#383f4a"/><rect x="12.4" y="9.2" width="2.2" height="1.8" fill="#383f4a"/><rect x="12.4" y="11.8" width="2.2" height="1.8" fill="#383f4a"/><rect x="9.6" y="11.8" width="2" height="1.8" fill="#383f4a"/><path d="M8.2 8.2 L8.2 11.8 L10.6 10.8 Z" fill="#3fa9ef"/><path d="M9.5 2.6 H14.4 V5" fill="none" stroke="#f0b540" stroke-width="1.1" stroke-dasharray="2 1"/><path d="M2.4 9.6 V12.9 H5.8" fill="none" stroke="#f0b540" stroke-width="1.1" stroke-dasharray="2 1"/></g><g transform="translate(491,665)"><circle cx="6" cy="8" r="6.1" fill="#c7d0e1"/><path d="M13.5 1.4 V7.2 M10.6 4.3 H16.4 M11.5 2.3 L15.5 6.3 M15.5 2.3 L11.5 6.3" stroke="#fcc12d" stroke-width="1"/><circle cx="13.5" cy="4.3" r="1.7" fill="#fcc12d"/><circle cx="13.5" cy="4.3" r="0.8" fill="#454c59"/></g></svg>
</body>
</html>
